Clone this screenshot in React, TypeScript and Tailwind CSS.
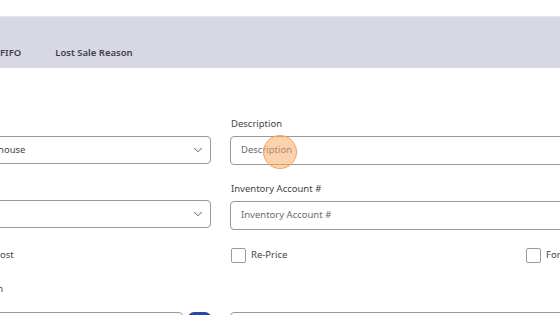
import { ChevronDown } from "lucide-react";

const font = { fontFamily: '"Noto Sans", "Open Sans", sans-serif' };

export default function App() {
  return (
    <div className="relative h-[315px] w-[560px] overflow-hidden bg-white" style={font}>
      <div className="h-4 bg-white" />
      <nav className="flex h-[52px] items-end gap-[34px] border-t border-[#e4e4ea] bg-[#d8d8e2] pb-[8px] text-[9.5px] font-semibold text-[#3d3d52]">
        <span>FIFO</span>
        <span>Lost Sale Reason</span>
      </nav>

      <div className="-ml-[36px] mt-[48px] grid grid-cols-[247px_1fr] gap-x-[19px]">
        {/* row 1 */}
        <div className="pt-[20px]">
          <SelectBox value="Warehouse" />
        </div>
        <div>
          <Label text="Description" />
          <TextBox placeholder="Description" />
        </div>

        {/* row 2 */}
        <div className="pt-[35px]">
          <SelectBox value="" />
        </div>
        <div className="pt-[16px]">
          <Label text="Inventory Account #" />
          <TextBox placeholder="Inventory Account #" />
        </div>

        {/* row 3 */}
        <div className="flex h-[50px] items-center pl-[30px] text-[9.5px] text-[#444]">Cost</div>
        <div className="flex h-[50px] items-center">
          <div className="w-[295px]">
            <Check label="Re-Price" />
          </div>
          <Check label="Force Price" />
        </div>

        {/* row 4 */}
        <div className="pl-[1px] pt-[2px] text-[9.5px] text-[#444]">Location</div>
        <div />

        <div className="mt-[16px] flex gap-[5px]">
          <div className="h-[30px] flex-1 rounded border border-[#999]" />
          <div className="h-[30px] w-[23px] rounded-t-md bg-[#2a46a6]" />
        </div>
        <div className="mt-[16px] h-[30px] rounded border border-[#999]" />
      </div>

      <div className="absolute left-[263px] top-[135px] h-[34px] w-[34px] rounded-full border border-[#f2a463] bg-[#f8a45e]/50" />
    </div>
  );
}

function Label({ text }: { text: string }) {
  return <p className="mb-[6px] pl-[1px] pt-[1px] text-[9.5px] leading-[14px] text-[#444]">{text}</p>;
}

function TextBox({ placeholder }: { placeholder: string }) {
  return (
    <div className="-mt-[1px] flex h-[29px] w-[360px] items-center rounded border border-[#999] px-[10px] text-[9.5px] text-[#6b6b6b]">
      {placeholder}
    </div>
  );
}

function SelectBox({ value }: { value: string }) {
  return (
    <div className="flex h-[28px] items-center justify-between rounded border border-[#999] pl-[10px] pr-[5px] text-[9.5px] text-[#444]">
      <span>{value}</span>
      <ChevronDown size={14} strokeWidth={1.7} className="text-[#555]" />
    </div>
  );
}

function Check({ label }: { label: string }) {
  return (
    <label className="flex items-center gap-[5px] text-[9.5px] text-[#444]">
      <span className="ml-[1px] h-[15px] w-[15px] rounded-[2px] border border-[#9a9a9a]" />
      <span className="whitespace-nowrap">{label}</span>
    </label>
  );
}
